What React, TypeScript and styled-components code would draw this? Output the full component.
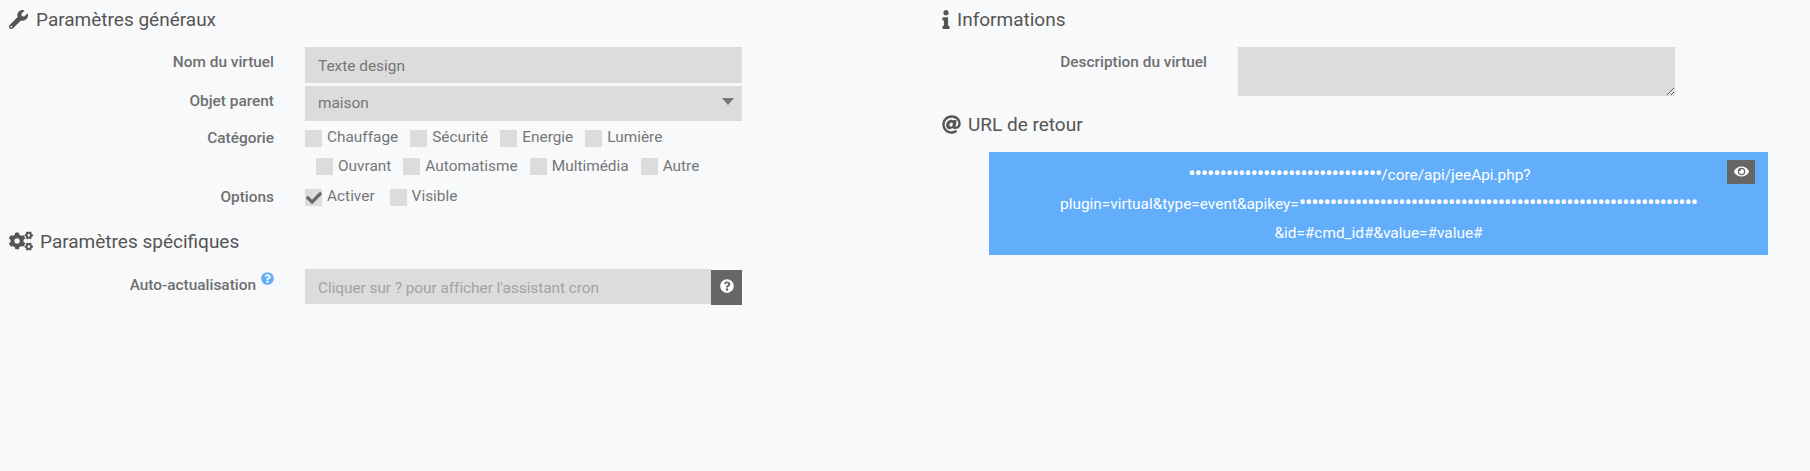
import styled, { createGlobalStyle } from 'styled-components';
import { FaAt, FaCheck, FaCogs, FaEye, FaInfo, FaQuestionCircle, FaWrench } from 'react-icons/fa';

const GlobalStyle = createGlobalStyle`
  html, body {
    margin: 0;
    padding: 0;
    background: #f8f9fb;
    font-family: Roboto, 'Liberation Sans', sans-serif;
    font-size: 15.4px;
    color: #6b6b6b;
  }
`;

const PageS = styled.div`
  display: flex;
  width: 1810px;
  height: 471px;
  overflow: hidden;
`;

const ColumnS = styled.div<{ $pad: number }>`
  width: 905px;
  box-sizing: border-box;
  padding-left: ${(props) => props.$pad}px;
  padding-top: 6px;
`;

const LegendS = styled.h3<{ $top?: number; $gap: number }>`
  display: flex;
  align-items: center;
  gap: ${(props) => props.$gap}px;
  height: 26px;
  margin: ${(props) => props.$top ?? 0}px 0 15px;
  font-size: 19px;
  font-weight: 400;
  color: #555;
  svg {
    fill: #555;
    flex: none;
  }
`;

const RowS = styled.div<{ $mb?: number }>`
  display: flex;
  gap: 31px;
  margin-bottom: ${(props) => props.$mb ?? 0}px;
`;

const LabelS = styled.label<{ $top: number }>`
  width: 265px;
  flex: none;
  text-align: right;
  font-weight: 500;
  font-size: 15.4px;
  line-height: 17px;
  padding-top: ${(props) => props.$top}px;
  color: #6f6f6f;
`;

const ControlS = styled.div`
  width: 437px;
`;

const InputS = styled.input<{ $h: number; $pt: number }>`
  display: block;
  width: 100%;
  height: ${(props) => props.$h}px;
  box-sizing: border-box;
  border: 0;
  border-radius: 0;
  padding: ${(props) => props.$pt}px 13px 0;
  background: #dcdcdc;
  color: #767676;
  font-family: inherit;
  font-size: 15.4px;
  outline: none;
  &::placeholder {
    color: #a3a3a3;
    letter-spacing: -0.05px;
    opacity: 1;
  }
`;

const SelectS = styled.div`
  position: relative;
  height: 35px;
  padding: 0 13px;
  background: #dcdcdc;
  color: #767676;
  line-height: 35px;
  &::after {
    content: '';
    position: absolute;
    right: 8px;
    top: 12px;
    border-left: 6.5px solid transparent;
    border-right: 6.5px solid transparent;
    border-top: 7px solid #777;
  }
`;

const CheckRowS = styled.div<{ $indent?: number; $gap: number; $mb?: number }>`
  display: flex;
  align-items: center;
  gap: ${(props) => props.$gap}px;
  height: 17px;
  margin-left: ${(props) => props.$indent ?? 0}px;
  margin-bottom: ${(props) => props.$mb ?? 11}px;
`;

const CheckItemS = styled.span<{ $lh?: number }>`
  display: flex;
  align-items: flex-start;
  gap: 5px;
  color: #767676;
  line-height: ${(props) => props.$lh ?? 15}px;
`;

const BoxS = styled.span`
  display: flex;
  align-items: center;
  justify-content: center;
  width: 17px;
  height: 17px;
  background: #dcdcdc;
  svg {
    fill: #666;
  }
`;

const InputGroupS = styled.div`
  display: flex;
  align-items: flex-start;
`;

const AddonS = styled.span`
  display: flex;
  align-items: center;
  justify-content: center;
  flex: none;
  width: 31px;
  height: 35px;
  margin-top: 1px;
  padding-bottom: 3px;
  box-sizing: border-box;
  background: #666;
  svg {
    fill: #fff;
  }
`;

const HelpIconS = styled(FaQuestionCircle)`
  fill: #62aefa;
  margin-left: 5px;
  vertical-align: 5px;
`;

const TextareaS = styled.textarea`
  display: block;
  width: 100%;
  height: 49px;
  box-sizing: border-box;
  border: 0;
  border-radius: 0;
  background: #dcdcdc;
  outline: none;
`;

const AlertS = styled.div`
  position: relative;
  box-sizing: border-box;
  width: 779px;
  height: 103px;
  margin-left: 47px;
  padding: 9px 50px;
  background: #62aefa;
  color: #fff;
  font-size: 15.4px;
  line-height: 29px;
  text-align: center;
`;

const DotsS = styled.span`
  font-size: 22px;
  line-height: 20px;
  letter-spacing: -1.2px;
  vertical-align: -1px;
`;

const LineSpacerS = styled.span`
  display: inline-block;
  width: 38px;
`;

const EyeButtonS = styled.span`
  position: absolute;
  right: 13px;
  top: 8px;
  display: flex;
  align-items: center;
  justify-content: center;
  width: 28px;
  height: 24px;
  padding-bottom: 2px;
  box-sizing: border-box;
  background: #666;
  svg {
    fill: #fff;
  }
`;

const categories = [
  { indent: 0, mb: 11, lh: 15, items: ['Chauffage', 'Sécurité', 'Energie', 'Lumière'] },
  { indent: 11, mb: 14, lh: 17, items: ['Ouvrant', 'Automatisme', 'Multimédia', 'Autre'] },
];

const dots = (count: number) => '•'.repeat(count);

export default function App() {
  return (
    <PageS>
      <GlobalStyle />
      <ColumnS $pad={9}>
        <LegendS $gap={8}>
          <FaWrench size={19} />
          Paramètres généraux
        </LegendS>
        <RowS $mb={3}>
          <LabelS $top={7}>Nom du virtuel</LabelS>
          <ControlS>
            <InputS $h={36} $pt={1} defaultValue="Texte design" />
          </ControlS>
        </RowS>
        <RowS $mb={9}>
          <LabelS $top={7}>Objet parent</LabelS>
          <ControlS>
            <SelectS>maison</SelectS>
          </ControlS>
        </RowS>
        <RowS>
          <LabelS $top={0}>Catégorie</LabelS>
          <ControlS>
            {categories.map((row) => (
              <CheckRowS key={row.indent} $indent={row.indent} $gap={12} $mb={row.mb}>
                {row.items.map((item) => (
                  <CheckItemS key={item} $lh={row.lh}>
                    <BoxS />
                    {item}
                  </CheckItemS>
                ))}
              </CheckRowS>
            ))}
          </ControlS>
        </RowS>
        <RowS>
          <LabelS $top={0}>Options</LabelS>
          <ControlS>
            <CheckRowS $gap={15}>
              <CheckItemS>
                <BoxS>
                  <FaCheck size={16} />
                </BoxS>
                Activer
              </CheckItemS>
              <CheckItemS>
                <BoxS />
                Visible
              </CheckItemS>
            </CheckRowS>
          </ControlS>
        </RowS>
        <LegendS $top={11} $gap={7}>
          <FaCogs size={24} />
          Paramètres spécifiques
        </LegendS>
        <RowS>
          <LabelS $top={3}>
            Auto-actualisation
            <HelpIconS size={13} />
          </LabelS>
          <ControlS>
            <InputGroupS>
              <InputS $h={35} $pt={2} placeholder="Cliquer sur ? pour afficher l'assistant cron" />
              <AddonS>
                <FaQuestionCircle size={14} />
              </AddonS>
            </InputGroupS>
          </ControlS>
        </RowS>
      </ColumnS>
      <ColumnS $pad={37}>
        <LegendS $gap={7}>
          <FaInfo size={19} style={{ width: 8 }} />
          Informations
        </LegendS>
        <RowS $mb={15}>
          <LabelS $top={7}>Description du virtuel</LabelS>
          <ControlS>
            <TextareaS />
          </ControlS>
        </RowS>
        <LegendS $gap={7}>
          <FaAt size={19} />
          URL de retour
        </LegendS>
        <AlertS>
          <DotsS>{dots(31)}</DotsS>/core/api/jeeApi.php?
          <LineSpacerS />
          <br />
          plugin=virtual&amp;type=event&amp;apikey=<DotsS>{dots(64)}</DotsS>
          <br />
          &amp;id=#cmd_id#&amp;value=#value#
          <EyeButtonS>
            <FaEye size={15} />
          </EyeButtonS>
        </AlertS>
      </ColumnS>
    </PageS>
  );
}
